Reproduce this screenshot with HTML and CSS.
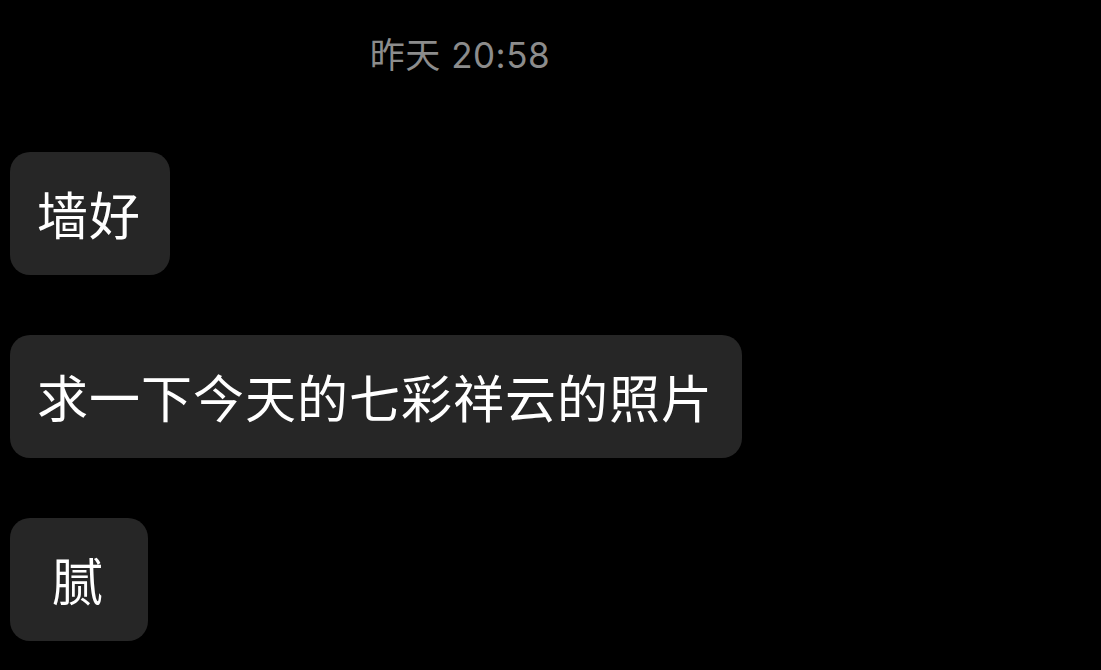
FILE: index.html
```html
<!DOCTYPE html>
<html lang="zh">
<head>
<meta charset="utf-8">
<link rel="stylesheet" href="styles.css">
</head>
<body>
<div class="chat">
  <div class="time">昨天 20:58</div>
  <div class="list">
    <div class="bubble">墙好</div>
    <div class="bubble">求一下今天的七彩祥云的照片</div>
    <div class="bubble">腻</div>
  </div>
</div>
</body>
</html>
```
FILE: styles.css
```css
html, body {
  margin: 0;
  padding: 0;
  background: #000;
  width: 1101px;
  height: 670px;
  overflow: hidden;
}
.chat {
  padding: 34px 10px 0 10px;
  font-family: Inter, "Noto Sans CJK SC", sans-serif;
}
.time {
  width: 900px;
  text-align: center;
  color: #8c8c8c;
  font-size: 35px;
  line-height: 42px;
  letter-spacing: 0.5px;
}
.list {
  margin-top: 76px;
  display: flex;
  flex-direction: column;
  align-items: flex-start;
  gap: 60px;
}
.bubble {
  box-sizing: border-box;
  min-width: 138px;
  text-align: center;
  background: #262626;
  color: #fff;
  font-family: "Noto Sans CJK SC", sans-serif;
  font-size: 51px;
  line-height: 51px;
  letter-spacing: 1px;
  padding: 36px 29px 36px 27px;
  border-radius: 20px;
}
```
